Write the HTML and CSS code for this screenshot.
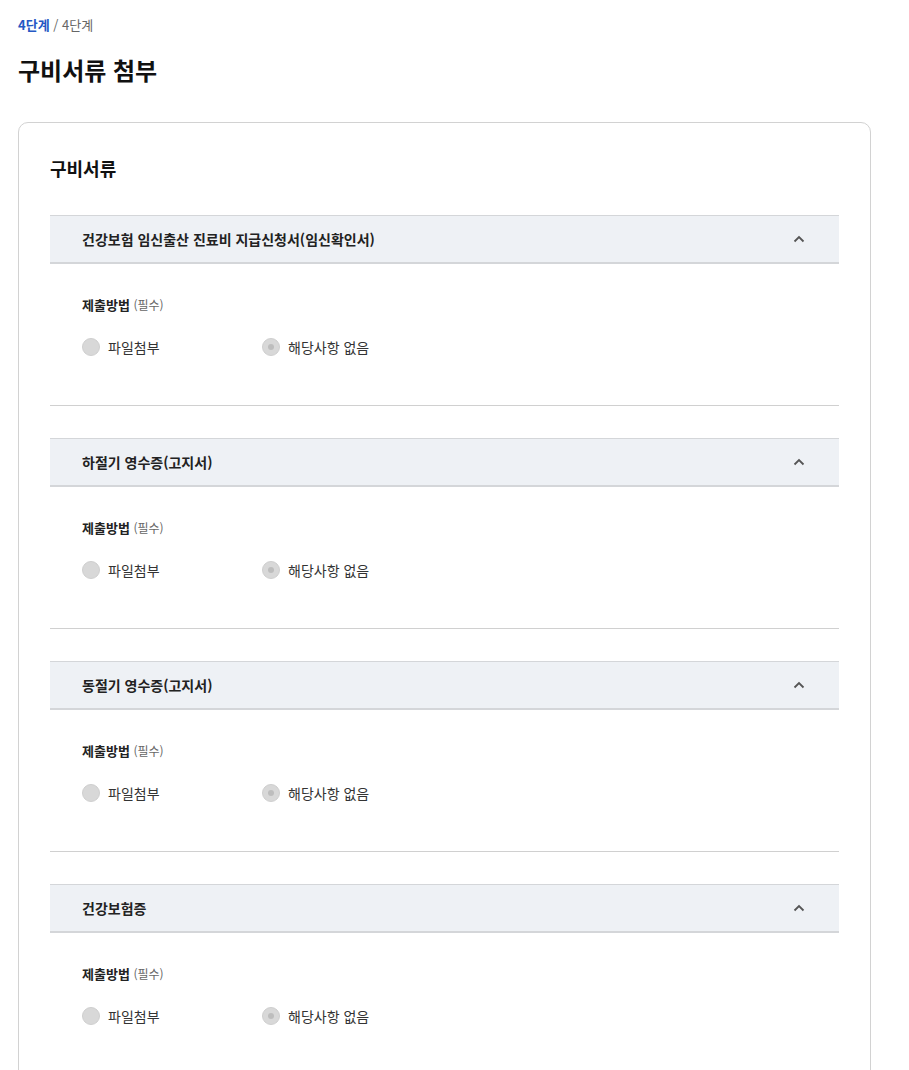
FILE: index.html
```
<!DOCTYPE html>
<html lang="ko">
<head>
<meta charset="utf-8">
<link rel="stylesheet" href="styles.css">
</head>
<body>
<div class="page">
  <div class="breadcrumb"><span class="current">4단계</span> / 4단계</div>
  <h1 class="title">구비서류 첨부</h1>
  <div class="card">
    <h2 class="card-title">구비서류</h2>

    <div class="item">
      <div class="item-head"><span>건강보험 임신출산 진료비 지급신청서(임신확인서)</span>
        <svg class="chev" width="12" height="8" viewBox="0 0 12 8"><polyline points="1.5,6.5 6,2 10.5,6.5" fill="none" stroke="#555" stroke-width="1.8"/></svg></div>
      <div class="item-body">
        <div class="field-label">제출방법 <span class="req">(필수)</span></div>
        <div class="radios">
          <label class="radio"><span class="dot"></span>파일첨부</label>
          <label class="radio"><span class="dot on"></span>해당사항 없음</label>
        </div>
      </div>
    </div>

    <div class="item">
      <div class="item-head"><span>하절기 영수증(고지서)</span>
        <svg class="chev" width="12" height="8" viewBox="0 0 12 8"><polyline points="1.5,6.5 6,2 10.5,6.5" fill="none" stroke="#555" stroke-width="1.8"/></svg></div>
      <div class="item-body">
        <div class="field-label">제출방법 <span class="req">(필수)</span></div>
        <div class="radios">
          <label class="radio"><span class="dot"></span>파일첨부</label>
          <label class="radio"><span class="dot on"></span>해당사항 없음</label>
        </div>
      </div>
    </div>

    <div class="item">
      <div class="item-head"><span>동절기 영수증(고지서)</span>
        <svg class="chev" width="12" height="8" viewBox="0 0 12 8"><polyline points="1.5,6.5 6,2 10.5,6.5" fill="none" stroke="#555" stroke-width="1.8"/></svg></div>
      <div class="item-body">
        <div class="field-label">제출방법 <span class="req">(필수)</span></div>
        <div class="radios">
          <label class="radio"><span class="dot"></span>파일첨부</label>
          <label class="radio"><span class="dot on"></span>해당사항 없음</label>
        </div>
      </div>
    </div>

    <div class="item">
      <div class="item-head"><span>건강보험증</span>
        <svg class="chev" width="12" height="8" viewBox="0 0 12 8"><polyline points="1.5,6.5 6,2 10.5,6.5" fill="none" stroke="#555" stroke-width="1.8"/></svg></div>
      <div class="item-body">
        <div class="field-label">제출방법 <span class="req">(필수)</span></div>
        <div class="radios">
          <label class="radio"><span class="dot"></span>파일첨부</label>
          <label class="radio"><span class="dot on"></span>해당사항 없음</label>
        </div>
      </div>
    </div>
  </div>
</div>
</body>
</html>
```
FILE: styles.css
```
html, body { margin: 0; padding: 0; background: #fff; }
body { font-family: "Noto Sans CJK KR", "Noto Sans", sans-serif; color: #1a1a1a; }
.page { padding: 16px 38px 0 18px; }
.breadcrumb { font-size: 13px; line-height: 18px; color: #666; }
.breadcrumb .current { color: #2558c4; font-weight: 700; }
.title { margin: 21px 0 0; font-size: 24px; line-height: 30px; font-weight: 700; color: #111; }
.card { margin-top: 37px; border: 1px solid #d2d2d2; border-radius: 10px; padding: 32px 31px 40px; }
.card-title { margin: 0; font-size: 18px; line-height: 26px; font-weight: 700; color: #111; }
.item { margin-top: 34px; }
.item + .item { margin-top: 32px; }
.item-head { display: flex; align-items: center; justify-content: space-between; height: 46px; padding: 0 34px 0 32px; background: #eef1f5; border-top: 1px solid #d4d6d9; border-bottom: 2px solid #d4d6d9; font-size: 14px; font-weight: 700; color: #222; }
.item-body { padding: 31px 32px 48px; border-bottom: 1px solid #d0d0d0; }
.field-label { font-size: 13px; line-height: 20px; font-weight: 700; color: #222; }
.req { font-size: 12px; font-weight: 400; color: #666; }
.radios { display: flex; margin-top: 22px; }
.radio { display: flex; align-items: center; width: 180px; font-size: 14px; line-height: 20px; color: #333; }
.dot { width: 16px; height: 16px; border-radius: 50%; background: #d8d8d8; border: 1px solid #cfcfcf; margin-right: 8px; display: flex; align-items: center; justify-content: center; }
.dot.on::after { content: ""; width: 6px; height: 6px; border-radius: 50%; background: #bdbdbd; }
```
